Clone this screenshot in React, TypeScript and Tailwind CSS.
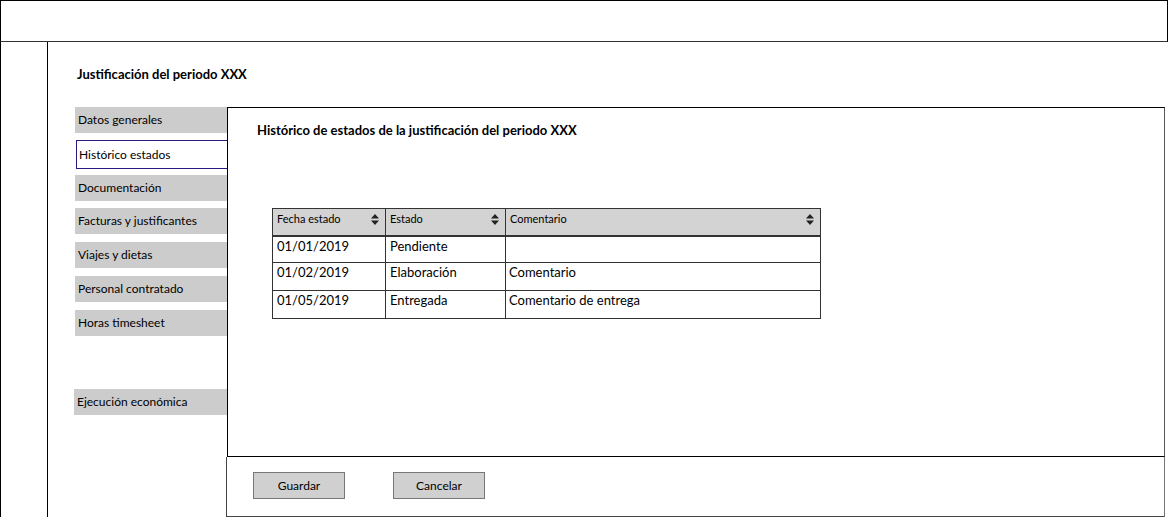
import React from "react";

const navItems = [
  { label: "Datos generales", cls: "mt-0 ml-0" },
  { label: "Histórico estados", cls: "mt-[7px] ml-px", active: true },
  { label: "Documentación", cls: "mt-[6px] ml-0" },
  { label: "Facturas y justificantes", cls: "mt-[7px] ml-0" },
  { label: "Viajes y dietas", cls: "mt-[8px] ml-0" },
  { label: "Personal contratado", cls: "mt-[8px] ml-0" },
  { label: "Horas timesheet", cls: "mt-[8px] ml-0" },
  { label: "Ejecución económica", cls: "mt-[53px] -ml-px" },
];

const rows = [
  { fecha: "01/01/2019", estado: "Pendiente", comentario: "", h: "h-[27px]" },
  { fecha: "01/02/2019", estado: "Elaboración", comentario: "Comentario", h: "h-[28px]" },
  { fecha: "01/05/2019", estado: "Entregada", comentario: "Comentario de entrega", h: "h-[28px]" },
];

function SortIcon() {
  return (
    <svg width="8" height="11" viewBox="0 0 8 11" className="shrink-0 mt-[2px]">
      <path d="M4 0 L8 4.5 H0 Z" fill="#222" />
      <path d="M0 6.5 H8 L4 11 Z" fill="#222" />
    </svg>
  );
}

function HeaderCell({ label, width }: { label: string; width: string }) {
  return (
    <th className={`${width} h-[27px] p-0 align-top border border-[#333] border-b-2 bg-[#d3d3d3] font-normal text-left`}>
      <div className="flex items-start justify-between pl-[4px] pr-[6px] pt-[3px]">
        <span className="text-[11px] leading-[14px]">{label}</span>
        <SortIcon />
      </div>
    </th>
  );
}

export default function App() {
  return (
    <div className="w-[1168px] h-[517px] bg-white text-black overflow-hidden font-['Lato','Liberation_Sans',sans-serif]">
      <div className="h-[42px] border border-black border-b-[#333]" />
      <div className="flex h-[475px]">
        <div className="w-[48px] shrink-0 border-l border-r border-black" />
        <div className="flex-1 flex flex-col pl-[29px]">
          <h1 className="pt-[24px] text-[13px] leading-4 font-bold">Justificación del periodo XXX</h1>
          <div className="flex mt-[25px]">
            <nav className="w-[152px] -ml-[2px] flex flex-col shrink-0">
              {navItems.map((item) =>
                item.active ? (
                  <div
                    key={item.label}
                    className={`${item.cls} h-[29px] flex items-center pl-[2px] bg-white border border-[#2a1a80] border-r-0 text-[12px]`}
                  >
                    {item.label}
                  </div>
                ) : (
                  <div
                    key={item.label}
                    className={`${item.cls} h-[26px] flex items-center pl-[3px] bg-[#cccccc] text-[12px]`}
                  >
                    {item.label}
                  </div>
                )
              )}
            </nav>
            <div className="flex flex-col shrink-0">
              <section className="w-[938px] h-[350px] border border-black border-r-[#555]">
                <h2 className="pl-[29px] pt-[14px] text-[13px] leading-4 font-bold">
                  Histórico de estados de la justificación del periodo XXX
                </h2>
                <table className="ml-[44px] mt-[70px] border-collapse w-[548px] table-fixed">
                  <thead>
                    <tr>
                      <HeaderCell label="Fecha estado" width="w-[113px]" />
                      <HeaderCell label="Estado" width="w-[120px]" />
                      <HeaderCell label="Comentario" width="w-[315px]" />
                    </tr>
                  </thead>
                  <tbody>
                    {rows.map((r) => (
                      <tr key={r.fecha}>
                        <td className={`${r.h} p-0 pl-[4px] align-top border border-[#333] text-[13px] leading-[18px]`}>{r.fecha}</td>
                        <td className={`${r.h} p-0 pl-[4px] align-top border border-[#333] text-[13px] leading-[18px]`}>{r.estado}</td>
                        <td className={`${r.h} p-0 pl-[3px] align-top border border-[#333] text-[13px] leading-[18px]`}>{r.comentario}</td>
                      </tr>
                    ))}
                  </tbody>
                </table>
              </section>
              <footer className="w-[939px] -ml-px h-[60px] border border-t-0 border-[#444] border-r-[#777] flex items-start gap-[48px] pl-[26px] pt-[15px]">
                <button className="w-[92px] h-[27px] bg-[#d0d0d0] border border-[#777] text-[12px]">Guardar</button>
                <button className="w-[92px] h-[27px] bg-[#d0d0d0] border border-[#777] text-[12px]">Cancelar</button>
              </footer>
            </div>
          </div>
        </div>
      </div>
    </div>
  );
}
